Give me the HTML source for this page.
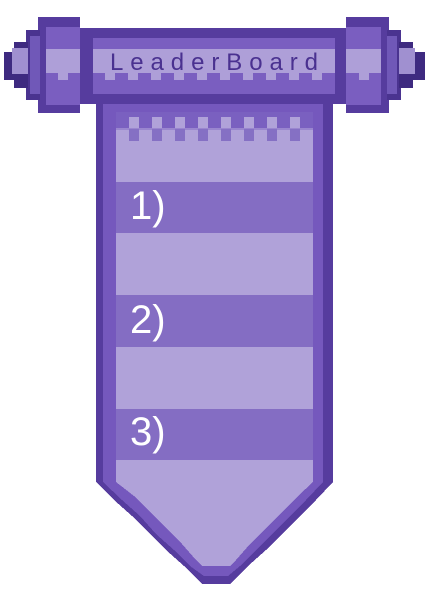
<!DOCTYPE html>
<html><head><style>
html,body{margin:0;padding:0;background:#fff;width:430px;height:600px;overflow:hidden}
.a{position:absolute}
.t{position:absolute;color:#fff;font-family:"Liberation Sans",sans-serif;font-size:40px;left:130px}
</style></head><body>
<svg class="a" style="left:0;top:0" width="430" height="600" shape-rendering="crispEdges">
<polygon points="96,100 333,100 333,482 316,500 300,516 282,534 266,550 248,566 230,584 202,584 184,566 166,550 150,534 132,516 114,500 96,482" fill="#563c9e"/>
<polygon points="103,100 323,100 323,482 306,500 290,516 272,534 256,550 240,566 228,576 204,576 190,566 174,550 156,534 140,516 122,500 103,482" fill="#7558bd"/>
<polygon points="116,112 313,112 313,482 298,496 282,512 266,528 250,544 236,560 230,566 202,566 196,560 182,544 166,528 150,512 134,496 116,482" fill="#b0a2d9"/>
<rect x="116" y="112" width="197" height="16" fill="#7a60c0"/>
<g fill="#b0a2d9">
<rect x="129" y="117" width="10" height="12"/><rect x="152" y="117" width="10" height="12"/><rect x="175" y="117" width="10" height="12"/><rect x="198" y="117" width="10" height="12"/><rect x="221" y="117" width="10" height="12"/><rect x="244" y="117" width="10" height="12"/><rect x="267" y="117" width="10" height="12"/><rect x="290" y="117" width="10" height="12"/>
</g>
<rect x="116" y="128" width="197" height="2" fill="#9a86cf"/>
<g fill="#8570c4">
<rect x="129" y="129" width="10" height="12"/><rect x="152" y="129" width="10" height="12"/><rect x="175" y="129" width="10" height="12"/><rect x="198" y="129" width="10" height="12"/><rect x="221" y="129" width="10" height="12"/><rect x="244" y="129" width="10" height="12"/><rect x="267" y="129" width="10" height="12"/><rect x="290" y="129" width="10" height="12"/>
</g>
<rect x="116" y="182" width="197" height="51" fill="#846dc3"/>
<rect x="116" y="295" width="197" height="52" fill="#846dc3"/>
<rect x="116" y="409" width="197" height="51" fill="#846dc3"/>
<rect x="80" y="28" width="266" height="76" fill="#563c9e"/>
<rect x="93" y="38" width="242" height="56" fill="#7a5ec0"/>
<rect x="93" y="49" width="242" height="24" fill="#ae9fd8"/>
<g fill="#ae9fd8">
<rect x="105" y="72" width="10" height="8"/><rect x="128" y="72" width="10" height="8"/><rect x="151" y="72" width="10" height="8"/><rect x="174" y="72" width="10" height="8"/><rect x="197" y="72" width="10" height="8"/><rect x="220" y="72" width="10" height="8"/><rect x="243" y="72" width="10" height="8"/><rect x="266" y="72" width="10" height="8"/><rect x="289" y="72" width="10" height="8"/><rect x="312" y="72" width="10" height="8"/>
</g>
<rect x="38" y="17" width="42" height="96" fill="#563c9e"/>
<rect x="46" y="27" width="34" height="78" fill="#7a5ec0"/>
<rect x="46" y="49" width="34" height="24" fill="#ae9fd8"/>
<rect x="58" y="72" width="10" height="8" fill="#ae9fd8"/>
<rect x="26" y="30" width="14" height="70" fill="#4a3390"/>
<rect x="30" y="36" width="10" height="58" fill="#7058b8"/>
<rect x="14" y="42" width="14" height="46" fill="#3e2a80"/>
<rect x="4" y="52" width="12" height="28" fill="#3e2a80"/>
<rect x="12" y="48" width="16" height="26" fill="#a090d0"/>
<rect x="346" y="17" width="43" height="96" fill="#563c9e"/>
<rect x="346" y="27" width="35" height="78" fill="#7a5ec0"/>
<rect x="346" y="49" width="35" height="24" fill="#ae9fd8"/>
<rect x="359" y="72" width="10" height="8" fill="#ae9fd8"/>
<rect x="387" y="30" width="14" height="70" fill="#4a3390"/>
<rect x="387" y="36" width="10" height="58" fill="#7058b8"/>
<rect x="399" y="42" width="14" height="46" fill="#3e2a80"/>
<rect x="411" y="52" width="14" height="28" fill="#3e2a80"/>
<rect x="399" y="48" width="16" height="26" fill="#a090d0"/>
<text x="110" y="70" font-family="Liberation Sans,sans-serif" font-size="24" fill="#4a3190" textLength="208" lengthAdjust="spacing">LeaderBoard</text>
</svg>
<div class="t" style="top:184px">1)</div>
<div class="t" style="top:298px">2)</div>
<div class="t" style="top:410px">3)</div>
</body></html>
